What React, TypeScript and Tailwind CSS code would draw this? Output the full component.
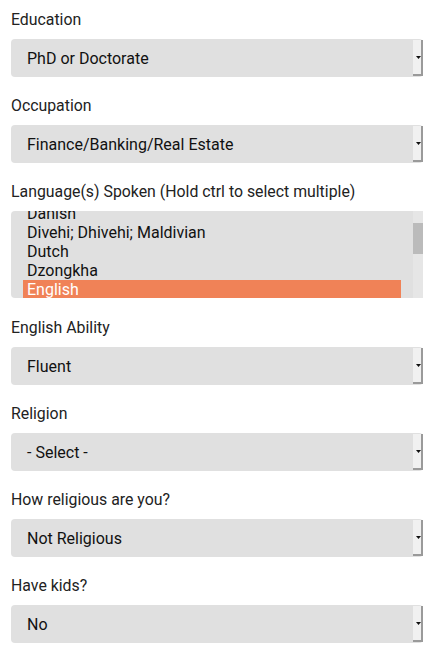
const fields = [
  { label: 'Education', value: 'PhD or Doctorate' },
  { label: 'Occupation', value: 'Finance/Banking/Real Estate' },
];

const fieldsAfter = [
  { label: 'English Ability', value: 'Fluent' },
  { label: 'Religion', value: '- Select -' },
  { label: 'How religious are you?', value: 'Not Religious' },
  { label: 'Have kids?', value: 'No' },
];

const languages = ['Danish', 'Divehi; Dhivehi; Maldivian', 'Dutch', 'Dzongkha', 'English'];

function Label({ children }: { children: string }) {
  return <div className="h-5 pt-[1px] text-[15.85px] leading-5 text-[#222]">{children}</div>;
}

function Select({ label, value }: { label: string; value: string }) {
  return (
    <div className="mb-[18px]">
      <Label>{label}</Label>
      <div className="mt-[10px] flex h-[38px] items-stretch rounded-[4px] bg-[#e0e0e0]">
        <div className="flex flex-1 items-center pl-4 pt-[2px] text-base text-[#111]">{value}</div>
        <div className="my-[1px] flex w-[10px] items-center justify-center border-r-2 border-b-2 border-[#9a9a9a] bg-[#f1f1f1]">
          <svg width="5" height="3" viewBox="0 0 5 3" className="ml-[2px]">
            <path d="M0 0h5L2.5 3z" fill="#111" />
          </svg>
        </div>
      </div>
    </div>
  );
}

export default function App() {
  return (
    <div className="min-h-[656px] bg-white pl-[11px] pr-[18px] pt-[9px] font-['Roboto',sans-serif]" style={{ width: 441 }}>
      {fields.map((f) => (
        <Select key={f.label} {...f} />
      ))}

      <div className="mb-[19px]">
        <Label>Language(s) Spoken (Hold ctrl to select multiple)</Label>
        <div className="relative mt-[10px] flex h-[87px] overflow-hidden rounded-l-[4px] bg-[#e0e0e0]">
          <div className="flex-1 overflow-hidden pl-3 pr-3">
            <div className="-mt-[7px]">
              {languages.map((l) => (
                <div
                  key={l}
                  className={
                    l === 'English'
                      ? 'h-[19px] bg-[#f08257] pl-1 text-base leading-[19px] text-white'
                      : 'h-[19px] pl-1 text-base leading-[19px] text-[#111]'
                  }
                >
                  {l}
                </div>
              ))}
            </div>
          </div>
          <div className="relative w-[10px] bg-[#e6e6e6]">
            <div className="absolute left-0 right-0 top-[12px] h-[31px] bg-[#bbbbbb]" />
          </div>
        </div>
      </div>

      {fieldsAfter.map((f) => (
        <Select key={f.label} {...f} />
      ))}
    </div>
  );
}
